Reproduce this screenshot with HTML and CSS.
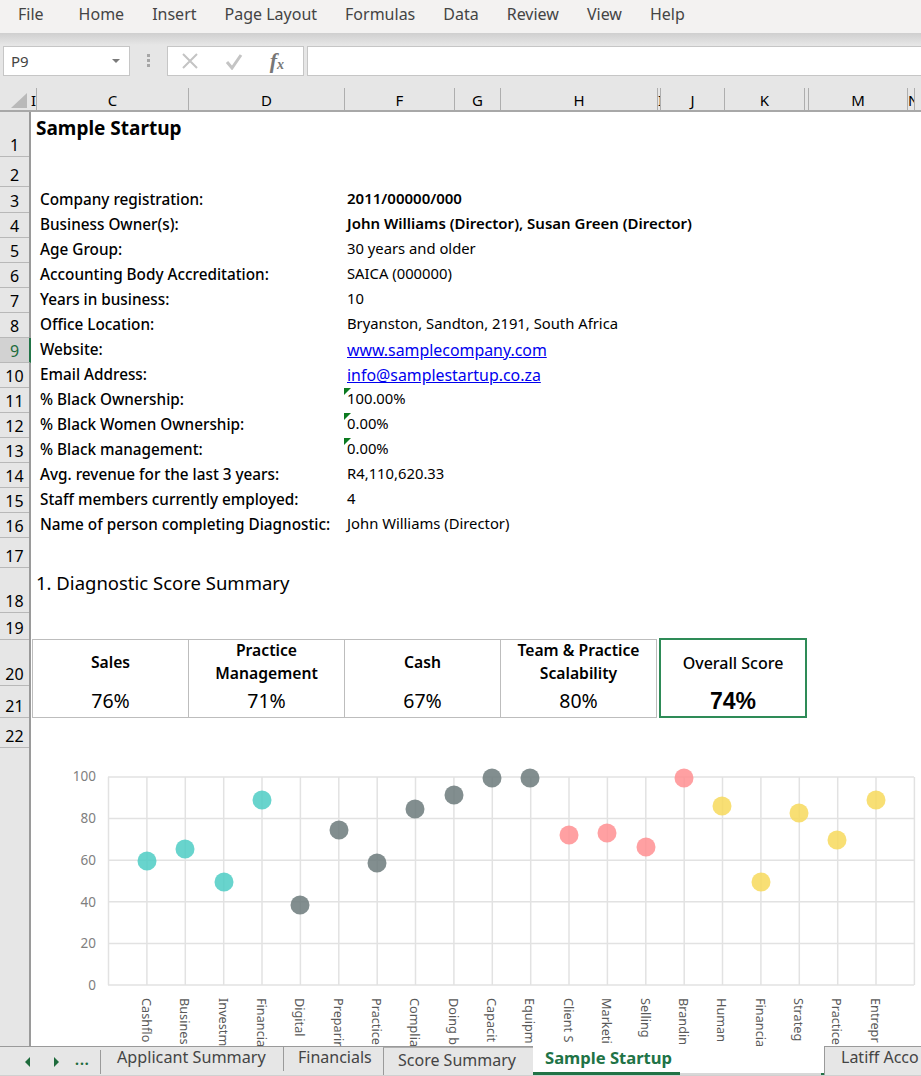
FILE: index.html
```html
<!DOCTYPE html>
<html lang="en">
<head>
    <meta charset="UTF-8">
    <title>Sample Startup</title>
    <link rel="stylesheet" href="styles.css">
</head>
<body>
    <!-- Ribbon tabs -->
    <nav class="menu">
        <span class="menu-file">File</span>
        <span>Home</span>
        <span>Insert</span>
        <span>Page Layout</span>
        <span>Formulas</span>
        <span>Data</span>
        <span>Review</span>
        <span>View</span>
        <span>Help</span>
    </nav>

    <!-- Name box and formula bar -->
    <div class="formula-row">
        <div class="name-box">
            <span>P9</span>
            <svg class="caret" width="8" height="4" viewBox="0 0 8 4"><path d="M0 0h8L4 4z" fill="#7a7a7a"/></svg>
        </div>
        <div class="grip"><i></i><i></i><i></i></div>
        <div class="fx-box">
            <svg width="18" height="18" viewBox="0 0 18 18"><path d="M2 2l14 14M16 2L2 16" stroke="#c4c4c4" stroke-width="2" fill="none"/></svg>
            <svg width="18" height="18" viewBox="0 0 18 18"><path d="M2 10l5 6L16 3" stroke="#c4c4c4" stroke-width="3" fill="none"/></svg>
            <span class="fx">f<sub>x</sub></span>
        </div>
        <div class="formula-input"></div>
    </div>

    <!-- Column letters -->
    <div class="col-heads">
        <div class="corner"></div>
        <div class="col">I</div>
        <div class="col">C</div>
        <div class="col">D</div>
        <div class="col">F</div>
        <div class="col">G</div>
        <div class="col">H</div>
        <div class="col narrow">I</div>
        <div class="col">J</div>
        <div class="col">K</div>
        <div class="col"></div>
        <div class="col">M</div>
        <div class="col narrow">N</div>
        <div class="col"></div>
    </div>

    <div class="sheet">
        <!-- Row numbers -->
        <div class="row-nums">
            <div class="num r45">1</div>
            <div class="num r30">2</div>
            <div class="num r26">3</div>
            <div class="num">4</div>
            <div class="num">5</div>
            <div class="num">6</div>
            <div class="num">7</div>
            <div class="num">8</div>
            <div class="num active">9</div>
            <div class="num">10</div>
            <div class="num">11</div>
            <div class="num">12</div>
            <div class="num">13</div>
            <div class="num">14</div>
            <div class="num">15</div>
            <div class="num">16</div>
            <div class="num r30">17</div>
            <div class="num r45">18</div>
            <div class="num r27">19</div>
            <div class="num r46">20</div>
            <div class="num r32">21</div>
            <div class="num r30">22</div>
        </div>

        <div class="cells">
            <h1 class="title">Sample Startup</h1>

            <div class="details">
                <div class="label">Company registration:</div><div class="value strong">2011/00000/000</div>
                <div class="label">Business Owner(s):</div><div class="value strong">John Williams (Director), Susan Green (Director)</div>
                <div class="label">Age Group:</div><div class="value">30 years and older</div>
                <div class="label">Accounting Body Accreditation:</div><div class="value">SAICA (000000)</div>
                <div class="label">Years in business:</div><div class="value">10</div>
                <div class="label">Office Location:</div><div class="value">Bryanston, Sandton, 2191, South Africa</div>
                <div class="label">Website:</div><div class="value link"><a href="#">www.samplecompany.com</a></div>
                <div class="label">Email Address:</div><div class="value link"><a href="#">info@samplestartup.co.za</a></div>
                <div class="label">% Black Ownership:</div><div class="value flag">100.00%</div>
                <div class="label">% Black Women Ownership:</div><div class="value flag">0.00%</div>
                <div class="label">% Black management:</div><div class="value flag">0.00%</div>
                <div class="label">Avg. revenue for the last 3 years:</div><div class="value">R4,110,620.33</div>
                <div class="label">Staff members currently employed:</div><div class="value">4</div>
                <div class="label">Name of person completing Diagnostic:</div><div class="value">John Williams (Director)</div>
            </div>

            <h2 class="section-title">1. Diagnostic Score Summary</h2>

            <div class="scores">
                <div class="score-table">
                    <div class="score"><b>Sales</b><span>76%</span></div>
                    <div class="score"><b>Practice Management</b><span>71%</span></div>
                    <div class="score"><b>Cash</b><span>67%</span></div>
                    <div class="score"><b>Team &amp; Practice Scalability</b><span>80%</span></div>
                </div>
                <div class="overall"><b>Overall Score</b><span>74%</span></div>
            </div>

            <!-- Chart, coordinates are page pixels -->
            <svg class="chart" viewBox="31 718 890 328" width="890" height="328">
                <g class="grid">
                    <path d="M108 777H914M108 818.600H914M108 860.200H914M108 901.800H914M108 943.400H914M108 985H914"/>
                    <path d="M108.500 777V985M146.900 777V985M185.300 777V985M223.700 777V985M262 777V985M300.400 777V985M338.800 777V985M377.200 777V985M415.500 777V985M453.900 777V985M492.300 777V985M530.700 777V985M569 777V985M607.400 777V985M645.800 777V985M684.200 777V985M722.500 777V985M760.900 777V985M799.300 777V985M837.700 777V985M876 777V985M914.400 777V985"/>
                </g>
                <g class="y-axis">
                    <text x="96" y="781">100</text>
                    <text x="96" y="823">80</text>
                    <text x="96" y="865">60</text>
                    <text x="96" y="907">40</text>
                    <text x="96" y="948">20</text>
                    <text x="96" y="990">0</text>
                </g>
                <g class="dots teal">
                    <circle cx="147" cy="861" r="9.500"/>
                    <circle cx="185" cy="849" r="9.500"/>
                    <circle cx="224" cy="882" r="9.500"/>
                    <circle cx="262" cy="800" r="9.500"/>
                </g>
                <g class="dots slate">
                    <circle cx="300" cy="905" r="9.500"/>
                    <circle cx="339" cy="830" r="9.500"/>
                    <circle cx="377" cy="863" r="9.500"/>
                    <circle cx="415" cy="809" r="9.500"/>
                    <circle cx="454" cy="795" r="9.500"/>
                    <circle cx="492" cy="778" r="9.500"/>
                    <circle cx="530" cy="778" r="9.500"/>
                </g>
                <g class="dots coral">
                    <circle cx="569" cy="835" r="9.500"/>
                    <circle cx="607" cy="833" r="9.500"/>
                    <circle cx="646" cy="847" r="9.500"/>
                    <circle cx="684" cy="778" r="9.500"/>
                </g>
                <g class="dots gold">
                    <circle cx="722" cy="806" r="9.500"/>
                    <circle cx="761" cy="882" r="9.500"/>
                    <circle cx="799" cy="813" r="9.500"/>
                    <circle cx="837" cy="840" r="9.500"/>
                    <circle cx="876" cy="800" r="9.500"/>
                </g>
                <g class="x-axis">
                    <text transform="translate(142 998) rotate(90)">Cashflo</text>
                    <text transform="translate(180 998) rotate(90)">Busines</text>
                    <text transform="translate(219 998) rotate(90)">Investm</text>
                    <text transform="translate(257 998) rotate(90)">Financia</text>
                    <text transform="translate(295 998) rotate(90)">Digital</text>
                    <text transform="translate(334 998) rotate(90)">Preparin</text>
                    <text transform="translate(372 998) rotate(90)">Practice</text>
                    <text transform="translate(410 998) rotate(90)">Complia</text>
                    <text transform="translate(449 998) rotate(90)">Doing b</text>
                    <text transform="translate(487 998) rotate(90)">Capacit</text>
                    <text transform="translate(525 998) rotate(90)">Equipm</text>
                    <text transform="translate(564 998) rotate(90)">Client S</text>
                    <text transform="translate(602 998) rotate(90)">Marketi</text>
                    <text transform="translate(641 998) rotate(90)">Selling</text>
                    <text transform="translate(679 998) rotate(90)">Brandin</text>
                    <text transform="translate(717 998) rotate(90)">Human</text>
                    <text transform="translate(756 998) rotate(90)">Financia</text>
                    <text transform="translate(794 998) rotate(90)">Strateg</text>
                    <text transform="translate(832 998) rotate(90)">Practice</text>
                    <text transform="translate(871 998) rotate(90)">Entrepr</text>
                </g>
            </svg>
        </div>
    </div>

    <!-- Sheet tabs -->
    <div class="tabs">
        <div class="tab-nav">
            <svg width="8" height="10" viewBox="0 0 8 10"><path d="M6 0v10L1 5z" fill="#1e6b3c"/></svg>
            <svg width="8" height="10" viewBox="0 0 8 10"><path d="M2 0v10l5-5z" fill="#1e6b3c"/></svg>
            <span class="more">...</span>
        </div>
        <div class="tab first">Applicant Summary</div>
        <div class="tab second">Financials</div>
        <div class="tab third">Score Summary</div>
        <div class="tab current">Sample Startup</div>
        <div class="tab-gap"></div>
        <div class="tab last">Latiff Acco</div>
    </div>
</body>
</html>
```

FILE: styles.css
```css
* {
    box-sizing: border-box;
}

body {
    margin: 0;
    width: 921px;
    height: 1076px;
    overflow: hidden;
    display: flex;
    flex-direction: column;
    background-color: #fff;
    color: #000;
    font-family: "Noto Sans", "Open Sans", sans-serif;
}

/* Ribbon */
.menu {
    height: 33px;
    display: flex;
    align-items: center;
    gap: 28px;
    padding: 0 0 5px 18px;
    background-color: #f3f2f1;
    color: #444;
    font-size: 16px;
}

.menu-file {
    margin-right: 7px;
}

/* Formula bar */
.formula-row {
    height: 55px;
    display: flex;
    align-items: flex-start;
    padding-top: 13px;
    background: linear-gradient(#cfcfcf, #e6e6e6 12px);
}

.name-box {
    width: 127px;
    height: 30px;
    margin-left: 3px;
    padding: 0 9px 0 7px;
    display: flex;
    align-items: center;
    justify-content: space-between;
    background-color: #fff;
    border: 1px solid #c6c6c6;
    color: #444;
    font-size: 15px;
}

.grip {
    width: 37px;
    height: 30px;
    display: flex;
    flex-direction: column;
    align-items: center;
    justify-content: center;
    gap: 2px;
}

.grip i {
    width: 3px;
    height: 3px;
    background-color: #a6a6a6;
}

.fx-box {
    width: 137px;
    height: 30px;
    display: flex;
    align-items: center;
    justify-content: space-between;
    padding: 0 19px 0 13px;
    background-color: #fff;
    border: 1px solid #c6c6c6;
}

.fx {
    font-family: "Liberation Serif", serif;
    font-size: 22px;
    font-style: italic;
    font-weight: bold;
    color: #777;
    line-height: 1;
}

.fx sub {
    font-size: 14px;
    vertical-align: -1px;
}

.formula-input {
    flex: 1;
    height: 30px;
    margin-left: 3px;
    background-color: #fff;
    border: 1px solid #c6c6c6;
    border-right: none;
}

/* Column letters */
.col-heads {
    height: 24px;
    display: grid;
    grid-template-columns: 31px 6px 152px 156px 110px 46px 157px 3px 64px 80px 4px 99px 7px 7px;
    background-color: #e6e6e6;
    border-bottom: 2px solid #a8a8a8;
}

.corner {
    position: relative;
}

.corner::after {
    content: "";
    position: absolute;
    left: 11px;
    top: 5px;
    border-style: solid;
    border-width: 0 0 15px 16px;
    border-color: transparent transparent #b9b9b9 transparent;
}

.col {
    border-right: 1px solid #aeaeae;
    text-align: center;
    font-size: 15px;
    line-height: 24px;
    overflow: hidden;
}

.col.narrow {
    text-align: left;
}

/* Sheet body */
.sheet {
    height: 935px;
    display: flex;
    overflow: hidden;
}

.row-nums {
    width: 31px;
    flex-shrink: 0;
    background-color: #e6e6e6;
    border-right: 2px solid #9a9a9a;
}

.num {
    height: 25px;
    display: flex;
    align-items: flex-end;
    justify-content: center;
    border-bottom: 1px solid #b8b8b8;
    font-size: 16px;
    line-height: 22px;
}

.num.r26 { height: 26px; }
.num.r27 { height: 27px; }
.num.r30 { height: 30px; }
.num.r32 { height: 32px; }
.num.r45 { height: 45px; }
.num.r46 { height: 46px; }

.num.active {
    background-color: #d2d2d2;
    color: #1e6b3c;
    margin-right: -2px;
    border-right: 2px solid #217346;
}

.cells {
    flex: 1;
    min-width: 0;
}

.title {
    height: 75px;
    margin: 0;
    padding: 3px 0 0 5px;
    font-size: 19px;
    font-weight: bold;
    line-height: 26px;
}

.details {
    display: grid;
    grid-template-columns: 316px 1fr;
    grid-auto-rows: 25px;
    font-size: 14.800px;
    padding-top: 1px;
}

.label {
    padding-left: 9px;
    font-size: 15.300px;
    font-weight: 500;
    line-height: 22px;
    white-space: nowrap;
}

.value {
    position: relative;
    line-height: 20px;
    white-space: nowrap;
}

.value.strong {
    font-size: 15px;
    font-weight: 600;
}

.value.link {
    line-height: 24px;
}

.value a {
    color: #0000ee;
    font-size: 15.900px;
}

/* Green corner marker on a cell */
.flag::before {
    content: "";
    position: absolute;
    left: -3px;
    top: 0;
    border-style: solid;
    border-width: 7px 7px 0 0;
    border-color: #0b7a1f transparent transparent transparent;
}

.section-title {
    height: 75px;
    margin: 0;
    padding: 32px 0 0 5px;
    font-size: 18.500px;
    font-weight: normal;
    line-height: 26px;
}

/* Score boxes */
.scores {
    height: 79px;
    margin-top: 26px;
    display: flex;
    align-items: flex-start;
}

.score-table {
    width: 625px;
    height: 79px;
    margin: 0 2px 0 1px;
    display: grid;
    grid-template-columns: 156px 156px 156px 1fr;
    border: 1px solid #bdbdbd;
}

.score {
    display: grid;
    grid-template-rows: 45px 1fr;
    text-align: center;
    border-right: 1px solid #bdbdbd;
    font-size: 15.700px;
}

.score:last-child {
    border-right: none;
}

.score b {
    align-self: center;
    padding: 0 10px;
    line-height: 23px;
    font-weight: 600;
}

.score span {
    font-size: 19.500px;
    line-height: 32px;
}

.overall {
    width: 148px;
    height: 80px;
    margin-top: -1px;
    display: grid;
    grid-template-rows: 47px 1fr;
    text-align: center;
    border: 2px solid #2e8b57;
    font-size: 16px;
}

.overall b {
    align-self: center;
    font-weight: 500;
}

.overall span {
    font-family: "Liberation Sans", sans-serif;
    font-size: 23px;
    font-weight: bold;
    line-height: 28px;
}

/* Chart */
.chart {
    display: block;
}

.grid path {
    fill: none;
    stroke: #e2e2e2;
    stroke-width: 1.500;
}

.y-axis text {
    fill: #7f7f7f;
    font-size: 13.500px;
    text-anchor: end;
}

.x-axis text {
    fill: #595959;
    font-size: 12.700px;
}

.dots circle {
    opacity: 0.85;
}

.teal { fill: #4ecdc4; }
.slate { fill: #6c7a7b; }
.coral { fill: #ff8f92; }
.gold { fill: #f7d95c; }

/* Sheet tabs */
.tabs {
    height: 30px;
    display: flex;
    background-color: #e6e6e6;
    border-top: 1px solid #9a9a9a;
    border-bottom: 1px solid #d0d0d0;
    font-size: 16px;
    color: #444;
}

.tab-nav {
    width: 101px;
    height: 24px;
    margin-top: 3px;
    padding: 0 10px 0 24px;
    display: flex;
    align-items: center;
    gap: 20px;
    border-right: 1px solid #9a9a9a;
}

.more {
    margin: -6px 0 0 -5px;
    color: #1e6b3c;
    font-weight: bold;
    font-size: 14px;
    letter-spacing: 1px;
}

.tab {
    white-space: nowrap;
    line-height: 20px;
    padding-top: 0;
}

.tab.first {
    width: 183px;
    padding-left: 16px;
    height: 24px;
    margin-top: 0;
    border-right: 1px solid #9a9a9a;
    font-size: 16.200px;
}

.tab.second {
    width: 99px;
    padding-left: 14px;
    height: 24px;
}

.tab.third {
    width: 150px;
    padding: 2px 0 0 14px;
    border-left: 1px solid #9a9a9a;
    border-top: 1px solid #b0b0b0;
}

.tab.current {
    width: 147px;
    margin-top: -1px;
    padding: 2px 0 0 12px;
    background-color: #fff;
    border-bottom: 3px solid #217346;
    color: #217346;
    font-size: 16.600px;
    font-weight: bold;
}

.tab-gap {
    position: relative;
    width: 144px;
    margin-top: -1px;
    background-color: #fff;
    border-bottom: 2px solid #d8d8d8;
}

/* Green end of the active tab's line, by the next tab */
.tab-gap::after {
    content: "";
    position: absolute;
    right: 0;
    bottom: -2px;
    width: 3px;
    height: 2px;
    background-color: #217346;
}

.tab.last {
    flex: 1;
    margin-top: -1px;
    padding-left: 16px;
    border-left: 1px solid #9a9a9a;
    border-top: 1px solid #9a9a9a;
    overflow: hidden;
}
```
